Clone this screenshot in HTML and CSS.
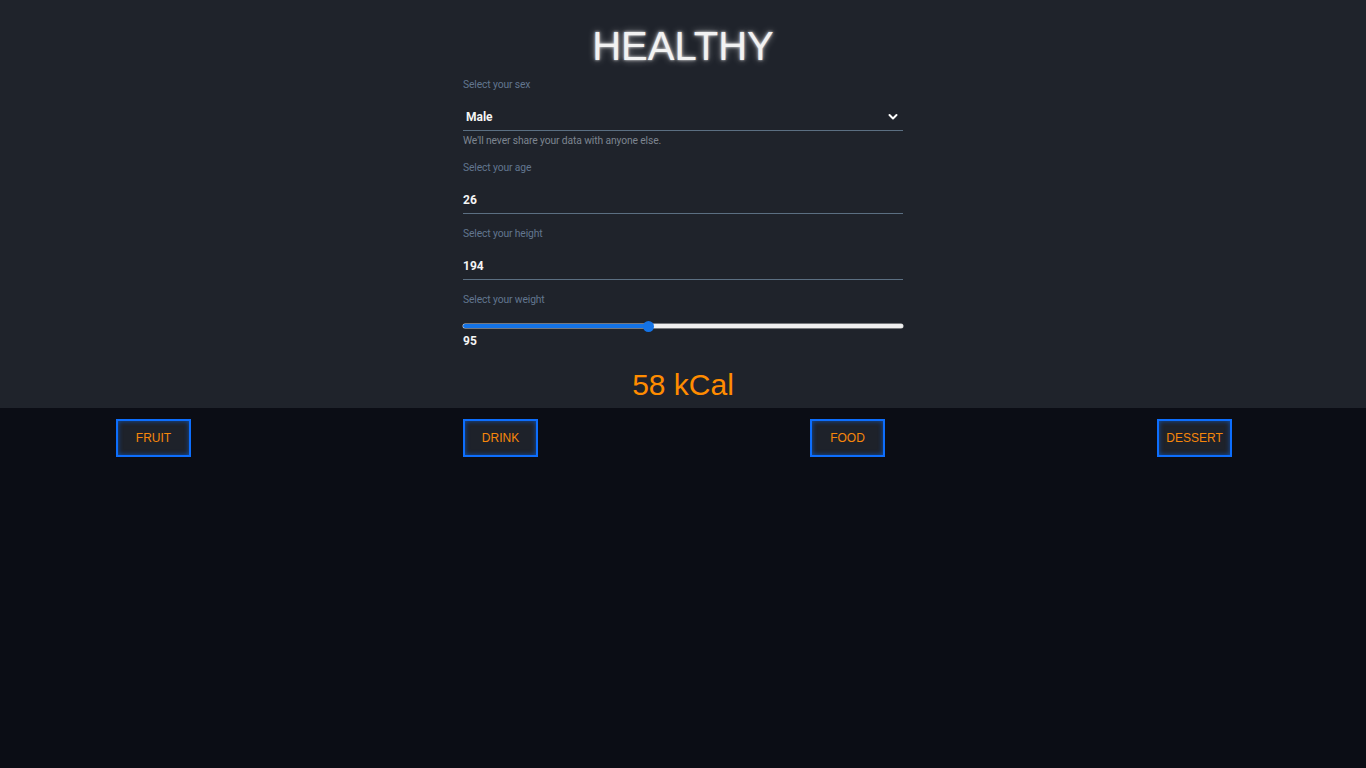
FILE: index.html
```html
<!DOCTYPE html>
<html lang="en">
<head>
<meta charset="utf-8">
<title>Healthy</title>
<link rel="stylesheet" href="styles.css">
</head>
<body>
<header class="top">
  <h1 class="title">HEALTHY</h1>
  <form class="form">
    <div class="field">
      <label class="label">Select your sex</label>
      <div class="input select">
        <span class="value sel-value">Male</span>
        <svg class="chev" width="10" height="8" viewBox="0 0 10 8"><path d="M1.5 2 L5 5.5 L8.5 2" fill="none" stroke="#ffffff" stroke-width="2" stroke-linecap="round" stroke-linejoin="round"/></svg>
      </div>
      <p class="help">We'll never share your data with anyone else.</p>
    </div>
    <div class="field">
      <label class="label">Select your age</label>
      <div class="input"><span class="value">26</span></div>
    </div>
    <div class="field">
      <label class="label">Select your height</label>
      <div class="input"><span class="value">194</span></div>
    </div>
    <div class="field">
      <label class="label">Select your weight</label>
      <div class="range">
        <div class="track"><div class="fill" style="width:42%"></div></div>
        <div class="thumb" style="left:42%"></div>
      </div>
      <div class="range-value">95</div>
    </div>
  </form>
  <div class="kcal">58 kCal</div>
</header>
<nav class="cats">
  <button class="cat">FRUIT</button>
  <button class="cat">DRINK</button>
  <button class="cat">FOOD</button>
  <button class="cat">DESSERT</button>
</nav>
</body>
</html>
```
FILE: styles.css
```css
html, body {
  margin: 0;
  padding: 0;
  height: 100%;
}
body {
  background: #0b0d15;
  font-family: "Liberation Sans", Arial, sans-serif;
}
.top {
  background: #1f232b;
  height: 408px;
  box-sizing: border-box;
  display: flex;
  flex-direction: column;
  align-items: center;
}
.title {
  margin: 22px 0 8px;
  font-family: "Liberation Sans", Arial, sans-serif;
  font-weight: normal;
  font-size: 40px;
  line-height: 48px;
  color: #f2f2f2;
  text-shadow: 0 0 3px rgba(255,255,255,0.85), 0 0 7px rgba(255,255,255,0.5);
}
.form {
  width: 440px;
  display: flex;
  flex-direction: column;
}
.field {
  display: flex;
  flex-direction: column;
  margin-bottom: 13px;
}
.label {
  font-family: Roboto, "Liberation Sans", sans-serif;
  font-size: 10.3px;
  line-height: 14px;
  color: #62768f;
  letter-spacing: -0.12px;
}
.input {
  box-sizing: border-box;
  height: 39px;
  padding-top: 15px;
  border-bottom: 1px solid #5b6f82;
  display: flex;
  align-items: flex-start;
  justify-content: space-between;
}
.value {
  font-family: Roboto, "Liberation Sans", sans-serif;
  font-weight: bold;
  font-size: 12px;
  line-height: 20px;
  color: #f4f4f4;
}
.sel-value {
  padding-left: 3px;
}
.chev {
  margin-top: 6px;
  margin-right: 5px;
}
.help {
  margin: 3px 0 0;
  font-family: Roboto, "Liberation Sans", sans-serif;
  font-size: 10.3px;
  line-height: 14px;
  color: #7d8590;
  letter-spacing: -0.12px;
}
.range {
  position: relative;
  margin-top: 12px;
  height: 14px;
  display: flex;
  align-items: center;
}
.track {
  width: 100%;
  height: 4px;
  border-radius: 3px;
  background: #efefef;
  box-shadow: 0 0 0 0.5px #cfcfcf;
  overflow: hidden;
}
.fill {
  height: 100%;
  background: #1473e6;
}
.thumb {
  position: absolute;
  top: 2px;
  width: 11px;
  height: 11px;
  margin-left: -5px;
  border-radius: 50%;
  background: #1473e6;
}
.range-value {
  margin-top: 1px;
  font-family: Roboto, "Liberation Sans", sans-serif;
  font-weight: bold;
  font-size: 12px;
  line-height: 14px;
  color: #f4f4f4;
}
.kcal {
  margin-top: 6px;
  font-family: "Liberation Sans", Arial, sans-serif;
  font-size: 30px;
  line-height: 36px;
  color: #ff8c00;
}
.cats {
  display: flex;
  justify-content: space-between;
  padding: 11px 134px 0 116px;
}
.cat {
  width: 75px;
  height: 38px;
  box-sizing: border-box;
  background: #1e222a;
  border: 2px solid #0d6efd;
  box-shadow: inset 0 0 5px rgba(13,110,253,0.6);
  color: #f7870a;
  font-family: "Liberation Sans", Arial, sans-serif;
  font-size: 12px;
  padding: 0;
  cursor: pointer;
}
```
